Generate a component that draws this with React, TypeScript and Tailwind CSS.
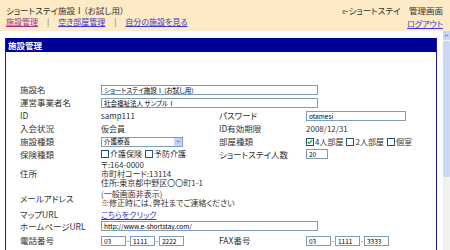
import React from 'react';

const font = 'font-["Noto_Sans_CJK_JP",sans-serif] [font-feature-settings:"palt"]';
const box = 'h-[10px] border border-[#7f9db9] bg-white px-[2px] text-[6.5px] leading-[8px] text-black outline-none';

function Check({ checked, label }: { checked?: boolean; label: string }) {
  return (
    <span className="mr-[3px] inline-flex items-center">
      <span className="mr-[1px] flex h-[8px] w-[8px] items-center justify-center border border-[#1c5180] bg-white">
        {checked ? (
          <svg viewBox="0 0 8 8" className="h-[6px] w-[6px]">
            <path d="M1 4 L3 6 L7 1.5" fill="none" stroke="#21a121" strokeWidth="1.6" />
          </svg>
        ) : null}
      </span>
      {label}
    </span>
  );
}

function Tel({ parts }: { parts: string[] }) {
  return (
    <div className="flex items-center">
      {parts.map((p, i) => (
        <React.Fragment key={p + i}>
          {i > 0 ? <span className="w-[4px] text-center text-[7px]">-</span> : null}
          <input readOnly defaultValue={p} className={`${box} w-[25px]`} />
        </React.Fragment>
      ))}
    </div>
  );
}

function Row({
  h,
  label,
  value,
  label2,
  value2,
  wide,
}: {
  h: string;
  label?: React.ReactNode;
  value?: React.ReactNode;
  label2?: string;
  value2?: React.ReactNode;
  wide?: boolean;
}) {
  return (
    <div className={`flex items-center ${h}`}>
      <div className="w-[81px] shrink-0 text-[8.5px]">{label}</div>
      {wide ? (
        <div className="flex-1">{value}</div>
      ) : (
        <>
          <div className="w-[118px] shrink-0">{value}</div>
          <div className="w-[87px] shrink-0 text-[8.5px]">{label2}</div>
          <div className="flex-1">{value2}</div>
        </>
      )}
    </div>
  );
}

export default function App() {
  return (
    <div className={`flex h-[250px] w-[450px] flex-col overflow-hidden bg-white text-[#333] ${font}`}>
      <header className="flex h-[31px] shrink-0 justify-between bg-[#fdeac6] pl-[6px] pr-[7px] pt-[5px]">
        <div>
          <p className="text-[8.5px] leading-[10px]">ショートステイ施設Ⅰ（お試し用）</p>
          <nav className="mt-[2px] flex gap-[9px] text-[8px] leading-[10px]">
            <a className="text-[#9b2d86] underline">施設管理</a>
            <span className="text-[#666]">|</span>
            <a className="text-[#3a3ad0] underline">空き部屋管理</a>
            <span className="text-[#666]">|</span>
            <a className="text-[#3a3ad0] underline">自分の施設を見る</a>
          </nav>
        </div>
        <div className="flex flex-col items-end">
          <p className="text-[8.5px] leading-[10px]">
            <span className="text-[6px]">e</span>-ショートステイ　管理画面
          </p>
          <a className="mt-[2px] text-[8px] leading-[10px] text-[#3a3ad0] underline">ログアウト</a>
        </div>
      </header>

      <div className="flex min-h-0 flex-1">
        <main className="flex-1 px-[5px] pt-[7px]">
          <section className="h-full border-x border-[#1a1aa0]">
            <h2 className="flex h-[14px] items-center bg-[#000096] pl-[2px] text-[8.5px] font-bold text-white">施設管理</h2>
            <div className="pl-[14px] pt-[31px] text-[8px] text-[#333]">
              <Row h="h-[13px]" wide label="施設名" value={<input readOnly defaultValue="ショートステイ施設Ⅰ（お試し用）" className={`${box} w-[217px]`} />} />
              <Row h="h-[13px]" wide label="運営事業者名" value={<input readOnly defaultValue="社会福祉法人 サンプルⅠ" className={`${box} w-[217px]`} />} />
              <Row
                h="h-[13px]"
                label="ID"
                value="samp111"
                label2="パスワード"
                value2={<input readOnly defaultValue="otamesi" className={`${box} w-[100px]`} />}
              />
              <Row h="h-[13px]" label="入会状況" value="仮会員" label2="ID有効期限" value2="2008/12/31" />
              <Row
                h="h-[13px]"
                label="施設種類"
                value={
                  <div className="flex h-[10px] w-[82px] items-center justify-between border border-[#7f9db9] bg-white pl-[2px] text-[6.5px] text-black">
                    介護療養
                    <span className="flex h-[8px] w-[8px] items-center justify-center bg-[#c3d3fb]">
                      <svg viewBox="0 0 8 8" className="h-[5px] w-[5px]">
                        <path d="M1.5 2.5 L4 5 L6.5 2.5" fill="none" stroke="#4d6185" strokeWidth="1.4" />
                      </svg>
                    </span>
                  </div>
                }
                label2="部屋種類"
                value2={
                  <div className="flex">
                    <Check checked label="4人部屋" />
                    <Check label="2人部屋" />
                    <Check label="個室" />
                  </div>
                }
              />
              <Row
                h="h-[12px]"
                label="保険種類"
                value={
                  <div className="flex">
                    <Check label="介護保険" />
                    <Check label="予防介護" />
                  </div>
                }
                label2="ショートステイ人数"
                value2={<input readOnly defaultValue="20" className={`${box} w-[22px]`} />}
              />
              <Row
                h="h-[27px]"
                wide
                label="住所"
                value={
                  <div className="leading-[9px]">
                    <p>〒:164-0000</p>
                    <p>市町村コード:13114</p>
                    <p>住所:東京都中野区〇〇町1-1</p>
                  </div>
                }
              />
              <Row
                h="h-[22px]"
                wide
                label="メールアドレス"
                value={
                  <div className="leading-[9px]">
                    <p>(一般画面非表示)</p>
                    <p>※修正時には、弊社までご連絡ください</p>
                  </div>
                }
              />
              <Row h="h-[11px]" wide label="マップURL" value={<a className="text-[#3a3ad0] underline">こちらをクリック</a>} />
              <Row h="h-[12px]" wide label="ホームページURL" value={<input readOnly defaultValue="http://www.e-shortstay.com/" className={`${box} w-[217px]`} />} />
              <Row
                h="h-[17px]"
                label="電話番号"
                value={<Tel parts={['03', '1111', '2222']} />}
                label2="FAX番号"
                value2={<Tel parts={['03', '1111', '3333']} />}
              />
              <Row
                h="h-[13px]"
                value={<input readOnly defaultValue="" className={`${box} w-[95px]`} />}
                value2={<input readOnly defaultValue="" className={`${box} w-[115px]`} />}
              />
            </div>
          </section>
        </main>

        <aside className="flex w-[8px] shrink-0 flex-col border-l border-white bg-[#f3f2ec]">
          <div className="flex h-[9px] items-center justify-center bg-[#c6d5f8]">
            <svg viewBox="0 0 8 8" className="h-[5px] w-[5px]">
              <path d="M1.5 5.5 L4 3 L6.5 5.5" fill="none" stroke="#4d6185" strokeWidth="1.4" />
            </svg>
          </div>
          <div className="mt-[1px] h-[136px] rounded-[1px] bg-[#cbd9f7]" />
        </aside>
      </div>
    </div>
  );
}
